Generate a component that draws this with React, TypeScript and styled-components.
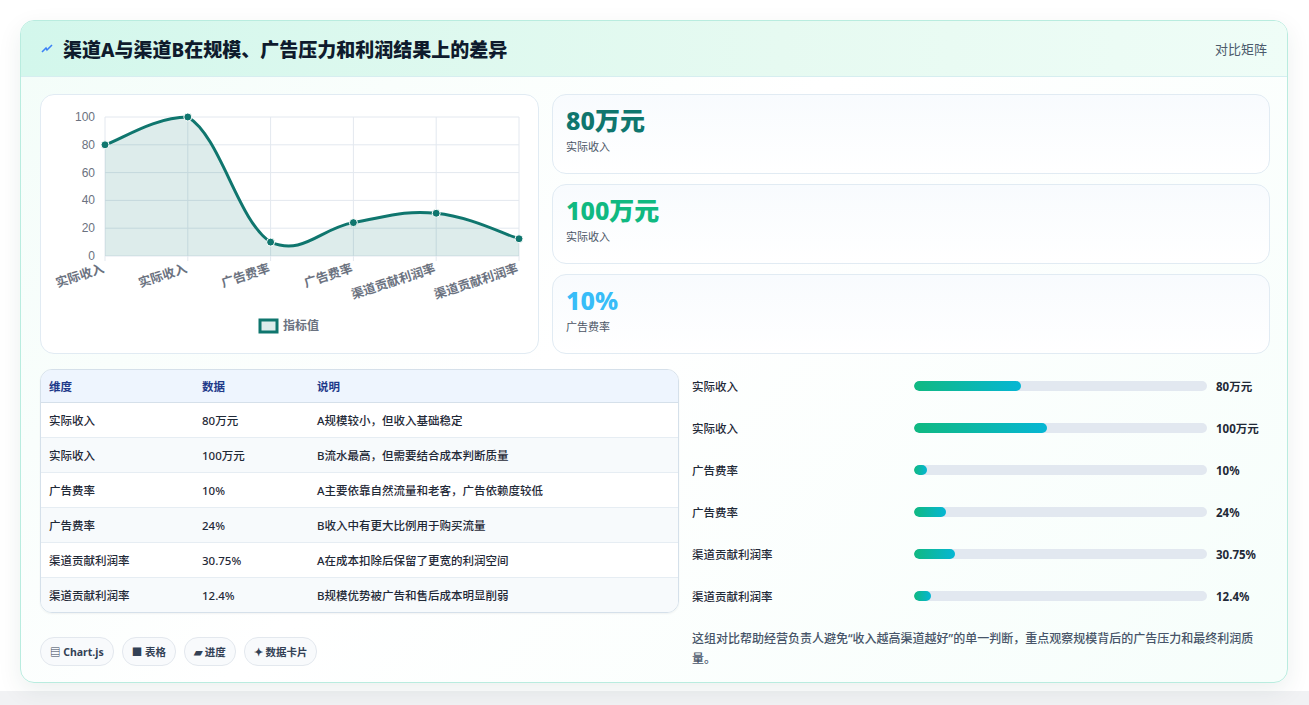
import React from 'react';
import styled, { createGlobalStyle } from 'styled-components';

const Global = createGlobalStyle`
  body {
    margin: 0;
    background: #ffffff;
    font-family: 'Noto Sans', 'Noto Sans CJK SC', sans-serif;
  }
`;

const Page = styled.div`
  width: 1309px;
  height: 705px;
  padding: 20px 20px 0 20px;
  box-sizing: border-box;
  background: linear-gradient(180deg, #ffffff 0%, #ffffff 98%, #f1f2f4 98%);
`;

const Card = styled.div`
  width: 1268px;
  height: 663px;
  box-sizing: border-box;
  border: 1px solid #b9ecdf;
  border-radius: 14px;
  overflow: hidden;
  background: linear-gradient(135deg, #f3fdf9 0%, #ffffff 45%, #f6fefb 100%);
  box-shadow: 0 8px 24px rgba(15, 60, 50, 0.08);
`;

const Header = styled.div`
  height: 55px;
  display: flex;
  align-items: center;
  justify-content: space-between;
  padding: 0 20px;
  background: linear-gradient(90deg, #d3f7ec 0%, #e6faf1 60%, #effdf7 100%);
  border-bottom: 1px solid #d6eef0;
`;

const Title = styled.h1`
  margin: 0;
  font-size: 19px;
  font-weight: 800;
  color: #0f1b2d;
  display: flex;
  align-items: center;
  gap: 10px;
`;

const HeaderTag = styled.span`
  font-size: 13px;
  color: #4b5a6b;
`;

const Body = styled.div`
  padding: 17px 19px 0 19px;
  display: flex;
  flex-direction: column;
  gap: 15px;
`;

const Row = styled.div<{ $cols: string }>`
  display: grid;
  grid-template-columns: ${(p) => p.$cols};
  column-gap: 13px;
`;

const Panel = styled.div`
  background: #ffffff;
  border: 1px solid #e1ebf3;
  border-radius: 14px;
`;

const ChartPanel = styled(Panel)`
  height: 260px;
  box-sizing: border-box;
`;

const StatList = styled.div`
  display: flex;
  flex-direction: column;
  gap: 10px;
`;

const StatCard = styled(Panel)`
  height: 80px;
  box-sizing: border-box;
  padding: 10px 13px;
  background: linear-gradient(180deg, #f8fbfe 0%, #ffffff 100%);
`;

const StatValue = styled.div<{ $color: string }>`
  font-size: 25px;
  font-weight: 800;
  line-height: 30px;
  color: ${(p) => p.$color};
`;

const StatLabel = styled.div`
  font-size: 11px;
  color: #4b5565;
  margin-top: 3px;
`;

const Table = styled.table`
  width: 100%;
  border-collapse: separate;
  border-spacing: 0;
  border: 1px solid #d5e0ea;
  border-radius: 12px;
  overflow: hidden;
  font-size: 11.5px;
  box-shadow: 0 1px 2px rgba(0,0,0,0.05);
`;

const Th = styled.th`
  text-align: left;
  font-weight: 700;
  color: #1e3a8a;
  background: #eef5fe;
  height: 32px;
  padding: 0 8px;
  border-bottom: 1px solid #d5e0ea;
`;

const Td = styled.td<{ $w?: string }>`
  height: 34px;
  padding: 0 8px;
  color: #1f2937;
  font-weight: 500;
  border-top: 1px solid #e6edf3;
  white-space: nowrap;
  width: ${(p) => p.$w || 'auto'};
`;

const Tr = styled.tr<{ $alt: boolean }>`
  background: ${(p) => (p.$alt ? '#f7fafc' : '#ffffff')};
  &:first-child td { border-top: none; }
`;

const LeftBottom = styled.div`
  display: flex;
  flex-direction: column;
  gap: 24px;
`;

const Chips = styled.div`
  display: flex;
  gap: 8px;
`;

const Chip = styled.span`
  height: 27px;
  padding: 0 9px;
  display: inline-flex;
  align-items: center;
  gap: 4px;
  border: 1px solid #e3e8ee;
  border-radius: 14px;
  background: #f8fafc;
  font-size: 10.5px;
  font-weight: 700;
  color: #334155;
`;

const Bars = styled.div`
  display: flex;
  flex-direction: column;
  margin-top: -4px;
`;

const BarRow = styled.div`
  height: 42px;
  display: grid;
  grid-template-columns: 213px 293px 1fr;
  column-gap: 9px;
  align-items: center;
  font-size: 11.5px;
  font-weight: 500;
  color: #1f2937;
`;

const Track = styled.div`
  height: 10px;
  border-radius: 5px;
  background: #e2e8f0;
  overflow: hidden;
`;

const Fill = styled.div`
  height: 100%;
  border-radius: 5px;
  background: linear-gradient(90deg, #10b981, #06b6d4);
`;

const BarValue = styled.span`
  font-weight: 700;
`;

const Note = styled.p`
  margin: 12px 0 0 0;
  font-size: 12px;
  line-height: 20px;
  font-weight: 500;
  color: #475569;
  padding-right: 4px;
`;

const rows = [
  ['实际收入', '80万元', 'A规模较小，但收入基础稳定', 80],
  ['实际收入', '100万元', 'B流水最高，但需要结合成本判断质量', 100],
  ['广告费率', '10%', 'A主要依靠自然流量和老客，广告依赖度较低', 10],
  ['广告费率', '24%', 'B收入中有更大比例用于购买流量', 24],
  ['渠道贡献利润率', '30.75%', 'A在成本扣除后保留了更宽的利润空间', 30.75],
  ['渠道贡献利润率', '12.4%', 'B规模优势被广告和售后成本明显削弱', 12.4],
] as const;

const Chart: React.FC = () => {
  const left = 64;
  const top = 22;
  const w = 414;
  const h = 139;
  const xs = rows.map((_, i) => left + (w / 5) * i);
  const ys = rows.map((r) => top + h * (1 - (r[3] as number) / 100));
  const pts = xs.map((x, i) => [x, ys[i]]);
  let d = `M${pts[0][0]},${pts[0][1]}`;
  const t = 0.4;
  const yMin = top;
  const yMax = top + h;
  const clamp = (v: number) => Math.min(yMax, Math.max(yMin, v));
  for (let i = 0; i < pts.length - 1; i++) {
    const p0 = pts[i - 1] || pts[i];
    const p1 = pts[i];
    const p2 = pts[i + 1];
    const p3 = pts[i + 2] || p2;
    const c1x = p1[0] + ((p2[0] - p0[0]) * t) / 2;
    const c1y = clamp(p1[1] + ((p2[1] - p0[1]) * t) / 2);
    const c2x = p2[0] - ((p3[0] - p1[0]) * t) / 2;
    const c2y = clamp(p2[1] - ((p3[1] - p1[1]) * t) / 2);
    d += ` C${c1x},${c1y} ${c2x},${c2y} ${p2[0]},${p2[1]}`;
  }
  const area = `${d} L${left + w},${top + h} L${left},${top + h} Z`;
  return (
    <svg width="498" height="258" fontFamily="'Liberation Sans', 'Noto Sans CJK SC', sans-serif">
      {[0, 20, 40, 60, 80, 100].map((v) => {
        const y = top + h * (1 - v / 100);
        return (
          <g key={v}>
            <line x1={left} x2={left + w} y1={y} y2={y} stroke="#e3e8ef" />
            <text x={left - 10} y={y + 4} fontSize="12" fill="#6b7280" textAnchor="end">{v}</text>
          </g>
        );
      })}
      {xs.map((x, i) => (
        <g key={i}>
          <line x1={x} x2={x} y1={top} y2={top + h + 5} stroke="#e3e8ef" />
          <text x={x} y={top + h + 16} fontSize="12.5" fontWeight="600" fill="#6b7280" textAnchor="end" transform={`rotate(-18 ${x} ${top + h + 16})`}>
            {rows[i][0]}
          </text>
        </g>
      ))}
      <path d={area} fill="rgba(15,118,110,0.14)" />
      <path d={d} fill="none" stroke="#0f766e" strokeWidth="3" />
      {pts.map((p, i) => (
        <circle key={i} cx={p[0]} cy={p[1]} r="4" fill="#0f766e" stroke="#ffffff" strokeWidth="1" />
      ))}
      <rect x="219" y="225" width="17" height="12" fill="rgba(15,118,110,0.14)" stroke="#0f766e" strokeWidth="3" />
      <text x="242" y="235" fontSize="12" fontWeight="600" fill="#6b7280">指标值</text>
    </svg>
  );
};

const App: React.FC = () => (
  <Page>
    <Global />
    <Card>
      <Header>
        <Title>
          <svg width="12" height="10" viewBox="0 0 12 10">
            <path d="M1 8 L5 4 L6 6 L11 1" fill="none" stroke="#3b82f6" strokeWidth="1.6" />
          </svg>
          渠道A与渠道B在规模、广告压力和利润结果上的差异
        </Title>
        <HeaderTag>对比矩阵</HeaderTag>
      </Header>
      <Body>
        <Row $cols="499px 718px">
          <ChartPanel>
            <Chart />
          </ChartPanel>
          <StatList>
            <StatCard>
              <StatValue $color="#0f766e">80万元</StatValue>
              <StatLabel>实际收入</StatLabel>
            </StatCard>
            <StatCard>
              <StatValue $color="#10b981">100万元</StatValue>
              <StatLabel>实际收入</StatLabel>
            </StatCard>
            <StatCard>
              <StatValue $color="#38bdf8">10%</StatValue>
              <StatLabel>广告费率</StatLabel>
            </StatCard>
          </StatList>
        </Row>
        <Row $cols="639px 579px">
          <LeftBottom>
            <Table>
              <thead>
                <tr>
                  <Th>维度</Th>
                  <Th>数据</Th>
                  <Th>说明</Th>
                </tr>
              </thead>
              <tbody>
                {rows.map((r, i) => (
                  <Tr key={i} $alt={i % 2 === 1}>
                    <Td $w="137px">{r[0]}</Td>
                    <Td $w="99px">{r[1]}</Td>
                    <Td>{r[2]}</Td>
                  </Tr>
                ))}
              </tbody>
            </Table>
            <Chips>
              <Chip>▤ Chart.js</Chip>
              <Chip>■ 表格</Chip>
              <Chip>▰ 进度</Chip>
              <Chip>✦ 数据卡片</Chip>
            </Chips>
          </LeftBottom>
          <Bars>
            {rows.map((r, i) => (
              <BarRow key={i}>
                <span>{r[0]}</span>
                <Track>
                  <Fill style={{ width: `${((r[3] as number) / 220) * 100}%` }} />
                </Track>
                <BarValue>{r[1]}</BarValue>
              </BarRow>
            ))}
            <Note>这组对比帮助经营负责人避免“收入越高渠道越好”的单一判断，重点观察规模背后的广告压力和最终利润质量。</Note>
          </Bars>
        </Row>
      </Body>
    </Card>
  </Page>
);

export default App;
